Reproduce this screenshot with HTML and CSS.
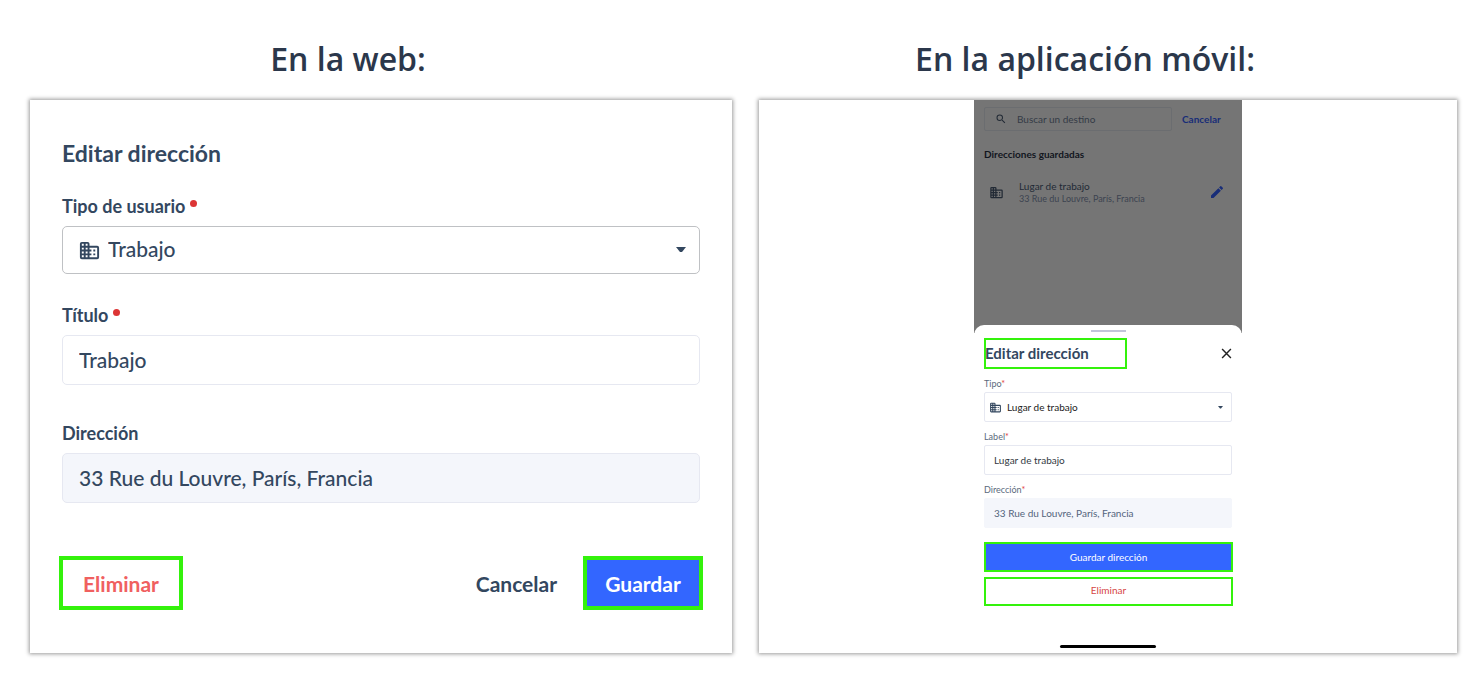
FILE: index.html
```html
<!DOCTYPE html>
<html lang="es">
<head>
    <meta charset="utf-8">
    <title>Editar dirección</title>
    <link rel="stylesheet" href="styles.css">
</head>
<body>
    <svg width="0" height="0" class="sprite">
        <symbol id="building" viewBox="0 0 24 24">
            <path d="M12 7V5a2 2 0 0 0-2-2H4a2 2 0 0 0-2 2v14a2 2 0 0 0 2 2h16a2 2 0 0 0 2-2V9a2 2 0 0 0-2-2h-8zM6 19H4v-2h2v2zm0-4H4v-2h2v2zm0-4H4V9h2v2zm0-4H4V5h2v2zm4 12H8v-2h2v2zm0-4H8v-2h2v2zm0-4H8V9h2v2zm0-4H8V5h2v2zm10 12h-8v-2h2v-2h-2v-2h2v-2h-2V9h8v10zm-2-8h-2v2h2v-2zm0 4h-2v2h2v-2z" fill="currentColor"/>
        </symbol>
        <symbol id="caret" viewBox="0 0 10 6">
            <path d="M0 0h10L6 5H4z" fill="currentColor"/>
        </symbol>
    </svg>

    <main class="comparison">
        <section class="column">
            <h1 class="heading heading-web">En la web:</h1>
            <form class="card web">
                <h2 class="web-title">Editar dirección</h2>

                <div class="field field-type">
                    <label for="type">Tipo de usuario <span class="dot"></span></label>
                    <div class="select">
                        <svg class="select-icon"><use href="#building"/></svg>
                        <select id="type">
                            <option>Trabajo</option>
                        </select>
                        <svg class="select-caret"><use href="#caret"/></svg>
                    </div>
                </div>

                <div class="field">
                    <label for="title">Título <span class="dot"></span></label>
                    <input type="text" id="title" value="Trabajo">
                </div>

                <div class="field">
                    <label for="address">Dirección</label>
                    <input type="text" id="address" value="33 Rue du Louvre, París, Francia" readonly>
                </div>

                <div class="web-actions">
                    <button type="button" class="btn delete marked">Eliminar</button>
                    <button type="button" class="btn cancel">Cancelar</button>
                    <button type="button" class="btn save marked">Guardar</button>
                </div>
            </form>
        </section>

        <section class="column">
            <h1 class="heading heading-app">En la aplicación móvil:</h1>
            <div class="card app">
                <div class="phone">
                    <div class="backdrop">
                        <div class="search">
                            <svg class="search-icon" viewBox="0 0 24 24"><path d="M15.500 14h-.79l-.28-.27A6.470 6.470 0 0 0 16 9.500 6.500 6.500 0 1 0 9.500 16c1.610 0 3.090-.59 4.230-1.570l.27.28v.79l5 4.990L20.490 19l-4.990-5zm-6 0a4.500 4.500 0 1 1 0-9 4.500 4.500 0 0 1 0 9z" fill="currentColor"/></svg>
                            <input type="text" placeholder="Buscar un destino" aria-label="Buscar un destino">
                            <button type="button">Cancelar</button>
                        </div>
                        <h3>Direcciones guardadas</h3>
                        <div class="saved">
                            <svg class="saved-icon"><use href="#building"/></svg>
                            <div class="saved-text">
                                <div class="saved-name">Lugar de trabajo</div>
                                <div class="saved-address">33 Rue du Louvre, París, Francia</div>
                            </div>
                            <button type="button" aria-label="Editar">
                                <svg viewBox="0 0 24 24"><path d="M3 17.250V21h3.750L17.810 9.940l-3.750-3.750L3 17.250zM20.710 7.040a1 1 0 0 0 0-1.410l-2.340-2.340a1 1 0 0 0-1.410 0l-1.830 1.830 3.750 3.750 1.830-1.830z" fill="currentColor"/></svg>
                            </button>
                        </div>
                    </div>

                    <form class="sheet">
                        <div class="handle"></div>
                        <div class="sheet-head">
                            <h2 class="marked">Editar dirección</h2>
                            <button type="button" class="close" aria-label="Cerrar">
                                <svg viewBox="0 0 10 10"><path d="M1 1l8 8M9 1L1 9" stroke="currentColor" stroke-width="1.300"/></svg>
                            </button>
                        </div>

                        <div class="field">
                            <label for="app-type">Tipo<span class="star">*</span></label>
                            <div class="select">
                                <svg class="select-icon"><use href="#building"/></svg>
                                <select id="app-type">
                                    <option>Lugar de trabajo</option>
                                </select>
                                <svg class="select-caret"><use href="#caret"/></svg>
                            </div>
                        </div>

                        <div class="field">
                            <label for="app-label">Label<span class="star">*</span></label>
                            <input type="text" id="app-label" value="Lugar de trabajo">
                        </div>

                        <div class="field">
                            <label for="app-address">Dirección<span class="star">*</span></label>
                            <input type="text" id="app-address" value="33 Rue du Louvre, París, Francia" readonly>
                        </div>

                        <div class="sheet-actions">
                            <button type="button" class="save marked">Guardar dirección</button>
                            <button type="button" class="delete marked">Eliminar</button>
                        </div>
                        <div class="home-bar"></div>
                    </form>
                </div>
            </div>
        </section>
    </main>
</body>
</html>
```

FILE: styles.css
```css
* { box-sizing: border-box; }
body { margin: 0; background: #fff; color: #33475f; font-family: Lato, "Liberation Sans", sans-serif; }
h1, h2, h3 { margin: 0; }
button, input, select { font: inherit; color: inherit; margin: 0; }
button { padding: 0; background: none; border: none; cursor: pointer; }
svg { display: block; }
.sprite { position: absolute; }

.comparison { display: grid; grid-template-columns: 702fr 698fr; gap: 27px; padding: 35px 23px 34px 30px; }
.column { display: flex; flex-direction: column; }
.heading { font-family: "Open Sans", sans-serif; font-size: 32px; line-height: 48px; font-weight: 600; color: #2b374b; text-align: center; margin-bottom: 17px; }
.heading-web { padding-right: 66px; }
.heading-app { padding-right: 46px; }
.card { flex: 1; background: #fff; box-shadow: 0 0 4px 1px rgba(0, 0, 0, 0.4); }
.marked { border: 4px solid #34f20c; }

/* shared fields */
.field label { display: block; }
.field input, .field select { display: block; width: 100%; background: #fff; border: 1px solid #e6e8f1; outline: none; }
.field input[readonly] { background: #f4f6fb; }
.select { position: relative; }
.select select { appearance: none; }
.select-icon, .select-caret { position: absolute; pointer-events: none; top: 0; bottom: 0; margin: auto 0; }

/* web form */
.web { padding: 38px 32px 43px; }
.web-title { font-size: 23px; line-height: 30px; font-weight: 700; margin-bottom: 26px; }
.web .field { margin-bottom: 36px; }
.web .field-type { margin-bottom: 29px; }
.web .field label { font-size: 18px; line-height: 24px; font-weight: 700; margin-bottom: 8px; }
.web .field input, .web .field select { height: 50px; padding: 0 16px 2px; border-radius: 5px; font-size: 21px; font-weight: 500; }
.web .field select { height: 48px; padding-left: 45px; padding-bottom: 4px; border-color: #bfc1c4; }
.web .select-icon { left: 16px; width: 23px; height: 23px; }
.web .select-caret { right: 14px; width: 10px; height: 6px; }
.dot { display: inline-block; width: 7px; height: 7px; border-radius: 50%; background: #dc3535; vertical-align: 6px; }
.web-actions { display: flex; align-items: center; margin: 53px -3px 0; }
.btn { height: 54px; font-size: 21px; font-weight: 700; }
.web .delete { width: 124px; color: #f0605f; }
.web .cancel { margin-left: auto; padding: 0 26px; }
.web .save { width: 120px; background: #3366ff; color: #fff; }

/* mobile app */
.phone { display: flex; flex-direction: column; width: 268px; height: 100%; margin: 0 auto; font-size: 10px; }
.backdrop { height: 233px; padding: 7px 10px; background: #757575; color: #222a35; }
.search { position: relative; display: flex; align-items: center; gap: 10px; }
.search input { width: 188px; height: 24px; padding: 0 10px 0 32px; background: none; border: 1px solid #6b6d70; border-radius: 2px; }
.search input::placeholder { color: #343b46; opacity: 1; }
.search button { color: #182d78; font-weight: 700; }
.search-icon { position: absolute; left: 11px; top: 6px; width: 12px; height: 12px; }
.backdrop h3 { font-size: 10px; line-height: 14px; color: #12161e; margin: 16px 0; }
.saved { display: flex; align-items: center; height: 30px; }
.saved-icon { width: 15px; height: 15px; margin: 0 15px 0 5px; }
.saved-text { flex: 1; line-height: 13px; }
.saved-address { font-size: 9px; line-height: 12px; color: #3c4350; }
.saved button { padding-right: 7px; color: #182d78; }
.saved button svg { width: 16px; height: 16px; }

.sheet { position: relative; flex: 1; margin-top: -8px; padding: 5px 10px; background: #fff; border-radius: 10px 10px 0 0; }
.handle { width: 35px; height: 2px; margin: 0 auto 6px; background: #c2c5da; }
.sheet .marked { border-width: 2px; }
.sheet-head { display: flex; align-items: center; justify-content: space-between; margin-bottom: 8px; }
.sheet-head h2 { width: 143px; height: 31px; font-size: 15px; line-height: 26px; text-indent: -1px; }
.close { color: #222; }
.close svg { width: 11px; height: 11px; }
.sheet .field { margin-bottom: 8px; }
.sheet .field label { font-size: 9px; line-height: 14px; color: #5b6a7d; margin-bottom: 1px; }
.sheet .field input, .sheet .field select { height: 30px; padding: 0 9px; border-radius: 2px; color: #333a44; }
.sheet .field input[readonly] { border-color: #f4f6fb; color: #53647b; }
.sheet .field select { padding-left: 22px; color: #222; }
.sheet .select-icon { left: 5px; width: 13px; height: 13px; }
.sheet .select-caret { right: 9px; width: 5px; height: 3px; }
.star { color: #e04040; }
.sheet-actions { display: flex; flex-direction: column; gap: 5px; margin: 14px -1px 0 0; }
.sheet .save { height: 30px; background: #3366ff; color: #fff; }
.sheet .delete { height: 29px; padding-bottom: 4px; color: #d64545; }
.home-bar { width: 96px; height: 3px; margin: 39px auto 0; border-radius: 2px; background: #000; }
```
